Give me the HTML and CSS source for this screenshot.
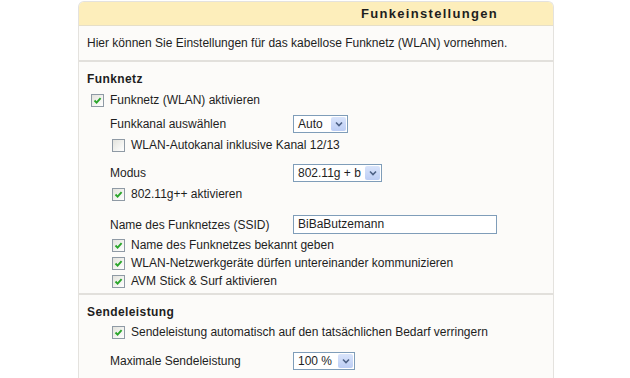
FILE: index.html
```html
<!DOCTYPE html>
<html lang="de">
<head>
    <meta charset="UTF-8">
    <title>Funkeinstellungen</title>
    <link rel="stylesheet" href="styles.css">
</head>
<body>
    <div class="panel">
        <div class="panel-head">Funkeinstellungen</div>
        <div class="intro">Hier können Sie Einstellungen für das kabellose Funknetz (WLAN) vornehmen.</div>

        <div class="section first">
            <h2>Funknetz</h2>
            <div class="check top"><span class="box"><svg viewBox="0 0 9 9"><path d="M1.5 4.5 L3.6 6.6 L7.6 2.2" /></svg></span>Funknetz (WLAN) aktivieren</div>
            <div class="sub">
                <div class="row first-row">
                    <span class="label">Funkkanal auswählen</span>
                    <div class="select w-auto"><span class="val">Auto</span><span class="btn"><svg viewBox="0 0 10 10"><path d="M2 3.5 L5 6.5 L8 3.5" /></svg></span></div>
                </div>
                <div class="check"><span class="box empty"></span>WLAN-Autokanal inklusive Kanal 12/13</div>
                <div class="row gap">
                    <span class="label">Modus</span>
                    <div class="select w-mode"><span class="val">802.11g + b</span><span class="btn"><svg viewBox="0 0 10 10"><path d="M2 3.5 L5 6.5 L8 3.5" /></svg></span></div>
                </div>
                <div class="check"><span class="box"><svg viewBox="0 0 9 9"><path d="M1.5 4.5 L3.6 6.6 L7.6 2.2" /></svg></span>802.11g++ aktivieren</div>
                <div class="row ssid">
                    <span class="label">Name des Funknetzes (SSID)</span>
                    <div class="text-input">BiBaButzemann</div>
                </div>
                <div class="check"><span class="box"><svg viewBox="0 0 9 9"><path d="M1.5 4.5 L3.6 6.6 L7.6 2.2" /></svg></span>Name des Funknetzes bekannt geben</div>
                <div class="check"><span class="box"><svg viewBox="0 0 9 9"><path d="M1.5 4.5 L3.6 6.6 L7.6 2.2" /></svg></span>WLAN-Netzwerkgeräte dürfen untereinander kommunizieren</div>
                <div class="check"><span class="box"><svg viewBox="0 0 9 9"><path d="M1.5 4.5 L3.6 6.6 L7.6 2.2" /></svg></span>AVM Stick &amp; Surf aktivieren</div>
            </div>
        </div>

        <div class="section">
            <h2>Sendeleistung</h2>
            <div class="sub">
                <div class="check top"><span class="box"><svg viewBox="0 0 9 9"><path d="M1.5 4.5 L3.6 6.6 L7.6 2.2" /></svg></span>Sendeleistung automatisch auf den tatsächlichen Bedarf verringern</div>
                <div class="row gap-lg">
                    <span class="label">Maximale Sendeleistung</span>
                    <div class="select w-power"><span class="val">100 %</span><span class="btn"><svg viewBox="0 0 10 10"><path d="M2 3.5 L5 6.5 L8 3.5" /></svg></span></div>
                </div>
            </div>
        </div>
    </div>
</body>
</html>
```

FILE: styles.css
```css
body {
    margin: 0;
    padding: 0;
    background: #ffffff;
    font-family: "Liberation Sans", Arial, sans-serif;
    font-size: 12px;
    color: #1e1e1e;
}
.panel {
    width: 474px;
    height: 376px;
    margin: 1px 0 0 78px;
    background: #fcfbf9;
    border: 1px solid #e4e2de;
    border-bottom: none;
    border-radius: 6px 6px 0 0;
}
.panel-head {
    height: 23px;
    line-height: 23px;
    background: #fdeebb;
    border-bottom: 1px solid #e6dfc8;
    border-radius: 5px 5px 0 0;
    text-align: right;
    padding-right: 55px;
    font-weight: bold;
    font-size: 13px;
    letter-spacing: 1.3px;
}
.intro {
    height: 34px;
    line-height: 34px;
    padding-left: 8px;
    border-bottom: 2px solid #e2e0dc;
}
.section {
    padding: 8px 0 3px 8px;
    border-bottom: 2px solid #e2e0dc;
}
.section:last-child {
    border-bottom: none;
}
h2 {
    margin: 0;
    height: 18px;
    line-height: 18px;
    font-size: 12px;
    letter-spacing: 0.4px;
}
.sub {
    padding-left: 23px;
}
.check {
    display: flex;
    align-items: center;
    height: 18px;
}
.check.top {
    margin-top: 3px;
    padding-left: 4px;
}
.sub .check {
    padding-left: 2px;
}
.section:last-child .check.top {
    margin-top: 2px;
}
.box {
    width: 11px;
    height: 11px;
    border: 1px solid #8f9aa5;
    background: linear-gradient(135deg, #e3e3dd, #ffffff);
    margin-right: 6px;
    display: flex;
    align-items: center;
    justify-content: center;
}
.box svg {
    width: 9px;
    height: 9px;
    fill: none;
    stroke: #2aa52a;
    stroke-width: 1.9;
}
.row {
    display: flex;
    align-items: center;
    height: 24px;
}
.row.first-row {
    margin-top: 3px;
}
.row.gap {
    margin-top: 7px;
}
.row.gap-lg {
    margin-top: 8px;
}
.row.ssid {
    height: 23px;
    margin-top: 10px;
}
.label {
    width: 183px;
}
.select {
    height: 16px;
    border: 1px solid #7f9db9;
    background: #ffffff;
    display: flex;
    align-items: center;
    justify-content: space-between;
    padding: 0 1px 0 4px;
}
.select .val {
    font-size: 12px;
}
.btn {
    width: 15px;
    height: 14px;
    background: linear-gradient(#d9e4fb, #bccdf4);
    border-radius: 2px;
    display: flex;
    align-items: center;
    justify-content: center;
}
.btn svg {
    width: 10px;
    height: 10px;
    fill: none;
    stroke: #4d6185;
    stroke-width: 1.6;
}
.w-auto {
    width: 48px;
}
.w-mode {
    width: 82px;
}
.w-power {
    width: 55px;
}
.text-input {
    width: 198px;
    height: 17px;
    line-height: 17px;
    border: 1px solid #7f9db9;
    background: #ffffff;
    padding-left: 4px;
}
```
